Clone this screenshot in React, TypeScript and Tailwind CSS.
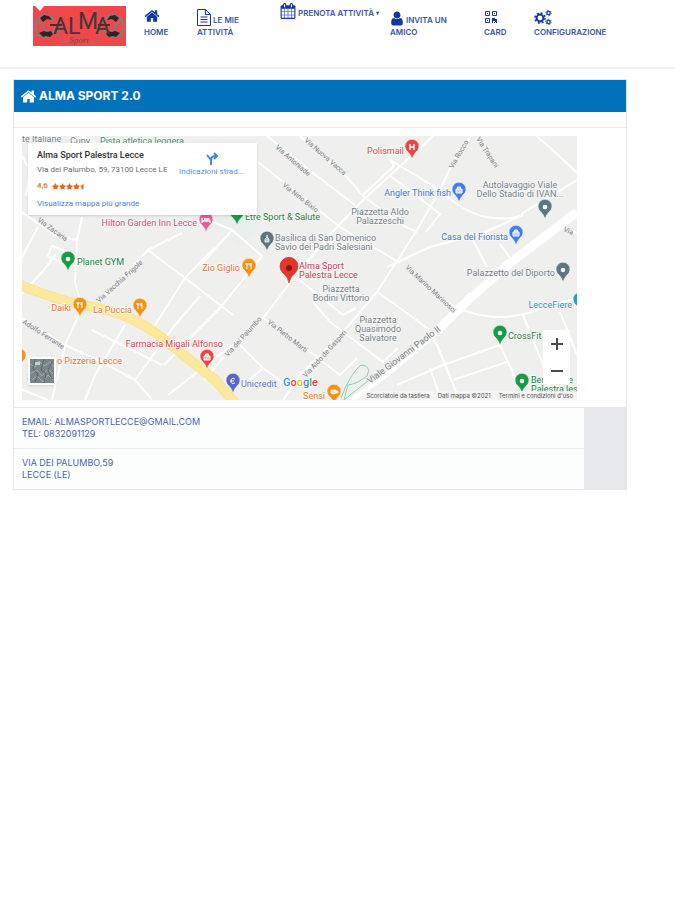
import type { ReactNode } from 'react'
import { FaStar, FaStarHalf } from 'react-icons/fa'

type Pin = { x: number; y: number; color: string; glyph: string }
type Label = { x: number; y: number; lines: string[]; color: string; anchor?: 'start' | 'middle' | 'end' }
type Street = { x: number; y: number; angle: number; name: string }

const GREEN = '#1b8043'
const PINK = '#d8497f'
const ORANGE = '#d97b3c'
const BLUE = '#4a72dc'
const GREY = '#747f86'
const RED = '#d84a48'

// x/y is the tip of the pin
const PINS: Pin[] = [
  { x: 46, y: 135, color: '#169c43', glyph: 'dot' },
  { x: 215, y: 89, color: '#169c43', glyph: 'dot' },
  { x: 184, y: 96, color: '#ea5a94', glyph: 'bed' },
  { x: 390, y: 23, color: '#e8473f', glyph: 'H' },
  { x: 437, y: 66, color: '#3f7df0', glyph: 'bag' },
  { x: 494, y: 109, color: '#3f7df0', glyph: 'bag' },
  { x: 523, y: 83, color: '#5d7681', glyph: 'dot' },
  { x: 541, y: 146, color: '#5d7681', glyph: 'dot' },
  { x: 245, y: 115, color: '#5d7681', glyph: 'church' },
  { x: 227, y: 142, color: '#f29318', glyph: 'fork' },
  { x: 58, y: 181, color: '#f29318', glyph: 'fork' },
  { x: 118, y: 182, color: '#f29318', glyph: 'fork' },
  { x: -3, y: 232, color: '#f29318', glyph: 'fork' },
  { x: 185, y: 233, color: '#e8473f', glyph: 'bag' },
  { x: 211, y: 257, color: '#5967c4', glyph: 'euro' },
  { x: 312, y: 268, color: '#f29318', glyph: 'cup' },
  { x: 478, y: 209, color: '#169c43', glyph: 'dot' },
  { x: 500, y: 257, color: '#169c43', glyph: 'dot' },
  { x: 558, y: 176, color: '#22a6b8', glyph: 'dot' },
]

const LABELS: Label[] = [
  { x: 55, y: 129, lines: ['Planet GYM'], color: GREEN },
  { x: 223, y: 84, lines: ['Etre Sport & Salute'], color: GREEN },
  { x: 175, y: 90, lines: ['Hilton Garden Inn Lecce'], color: PINK, anchor: 'end' },
  { x: 382, y: 18, lines: ['Polismail'], color: RED, anchor: 'end' },
  { x: 429, y: 60, lines: ['Angler Think fish'], color: BLUE, anchor: 'end' },
  { x: 486, y: 104, lines: ['Casa del Fiorista'], color: BLUE, anchor: 'end' },
  { x: 498, y: 52, lines: ['Autolavaggio Viale', 'Dello Stadio di IVAN...'], color: GREY, anchor: 'middle' },
  { x: 533, y: 140, lines: ['Palazzetto del Diporto'], color: GREY, anchor: 'end' },
  { x: 253, y: 105, lines: ['Basilica di San Domenico', 'Savio dei Padri Salesiani'], color: GREY },
  { x: 358, y: 79, lines: ['Piazzetta Aldo', 'Palazzeschi'], color: GREY, anchor: 'middle' },
  { x: 319, y: 156, lines: ['Piazzetta', 'Bodini Vittorio'], color: GREY, anchor: 'middle' },
  { x: 356, y: 187, lines: ['Piazzetta', 'Quasimodo', 'Salvatore'], color: GREY, anchor: 'middle' },
  { x: 218, y: 135, lines: ['Zio Giglio'], color: ORANGE, anchor: 'end' },
  { x: 49, y: 175, lines: ['Daiki'], color: ORANGE, anchor: 'end' },
  { x: 110, y: 177, lines: ['La Puccia'], color: ORANGE, anchor: 'end' },
  { x: 35, y: 228, lines: ['o Pizzeria Lecce'], color: ORANGE },
  { x: 201, y: 211, lines: ['Farmacia Migali Alfonso'], color: RED, anchor: 'end' },
  { x: 219, y: 251, lines: ['Unicredit'], color: '#6470bd' },
  { x: 303, y: 263, lines: ['Sensi'], color: ORANGE, anchor: 'end' },
  { x: 277, y: 133, lines: ['Alma Sport', 'Palestra Lecce'], color: '#cf3a55' },
  { x: 486, y: 203, lines: ['CrossFit'], color: GREEN },
  { x: 509, y: 247, lines: ['Benessere', 'Palestra les'], color: GREEN },
  { x: 550, y: 172, lines: ['LecceFiere'], color: '#2497a8', anchor: 'end' },
  { x: 0, y: 6, lines: ['te Italiane'], color: GREY },
  { x: 48, y: 8, lines: ['Cupy'], color: GREY },
  { x: 78, y: 8, lines: ['Pista atletica leggera'], color: '#4b8a68' },
]

const STREETS: Street[] = [
  { x: 253, y: 12, angle: 41, name: 'Via Antoniade' },
  { x: 282, y: 5, angle: 41, name: 'Via Nuova Vacca' },
  { x: 260, y: 50, angle: 38, name: 'Via Nino Bixio' },
  { x: 15, y: 85, angle: 36, name: 'Via Zacaria' },
  { x: 77, y: 167, angle: -42, name: 'Via Vecchia Frigole' },
  { x: 0, y: 187, angle: 33, name: 'Adolfo Ferrante' },
  { x: 206, y: 221, angle: -48, name: 'Via dei Palumbo' },
  { x: 245, y: 187, angle: 38, name: 'Via Pietro Marti' },
  { x: 284, y: 242, angle: -48, name: 'Via Aldo de Gasperi' },
  { x: 383, y: 132, angle: 43, name: 'Via Marino Marinosci' },
  { x: 431, y: 33, angle: -60, name: 'Via Rocco' },
  { x: 454, y: 3, angle: 57, name: 'Via Trapani' },
  { x: 541, y: 95, angle: 24, name: 'Via' },
]

const ROADS = [
  'M411 0L338 67L315 91L278 134L241 182L215 206L182 244',
  'M245 0L291 37L333 69', 'M278 0L325 41L341 60L382 90L395 96',
  'M236 26L318 91L378 127', 'M451 -3L432 24L418 54L395 94L355 156L321 196L278 239L261 264',
  'M368 24L418 54Q445 80 471 82T501 77L555 44', 'M365 131L408 111L461 97L501 79',
  'M510 -4L535 18L555 37', 'M541 91L555 97', 'M368 40L395 60L418 78L404 96',
  'M385 129Q405 160 441 174T515 174L555 162',
  'M60 81L55 104L53 146L60 172L43 209L30 264', 'M16 91L0 121', 'M0 76L34 100L55 104',
  'M160 97L126 114L76 166', 'M126 114L163 142L211 179', 'M192 112L163 142L131 192',
  'M103 189L73 239L63 264', 'M70 194L140 229', 'M-4 180L43 209L80 226L113 244L130 264',
  'M113 244L153 189L178 160', 'M240 120L198 172L178 192L142 229', 'M-4 252L26 264', 'M146 259L193 222L215 206',
  'M178 80L210 94L178 130', 'M210 94L240 120L228 136', 'M241 182L288 216L318 239L335 222',
  'M215 206L241 232L268 252', 'M241 232L220 250', 'M291 166L308 186L361 226L376 212',
  'M275 142L321 179L334 172', 'M355 156L378 172L405 192L415 209L435 258',
  'M375 249L421 229L478 209L498 252', 'M431 244L485 226', 'M501 179L521 229L530 262',
  'M538 176L555 219', 'M408 232L417 258', 'M451 104L465 131', 'M478 108L488 122', 'M60 0L82 12L79 0',
  'M0 20L8 34L4 60', 'M30 110L52 118L44 128L26 120Z', 'M-2 160L22 134L34 118', 'M341 59L372 30L368 24',
]

function Fa({ d, className }: { d: string; className: string }) {
  return <svg viewBox="0 0 1792 1792" className={className} fill="currentColor" aria-hidden="true"><path d={d} /></svg>
}

const HOME = 'M1472 992v480q0 26-19 45t-45 19h-384v-384h-256v384h-384q-26 0-45-19t-19-45v-480q0-1 .5-3t.5-3l575-474 575 474q1 2 1 6zm223-69l-62 74q-8 9-21 11h-3q-13 0-21-7l-692-577-692 577q-12 8-24 7-13-2-21-11l-62-74q-8-10-7-23.5t11-21.5l719-599q32-26 76-26t76 26l244 204v-195q0-14 9-23t23-9h192q14 0 23 9t9 23v408l219 182q10 8 11 21.5t-7 23.5z'
const CALENDAR = 'M192 1664h288v-288h-288v288zm352 0h320v-288h-320v288zm-352-352h288v-320h-288v320zm352 0h320v-320h-320v320zm-352-384h288v-288h-288v288zm736 736h320v-288h-320v288zm-384-736h320v-288h-320v288zm768 736h288v-288h-288v288zm-384-352h320v-320h-320v320zm-352-864v-288q0-13-9.5-22.5t-22.5-9.5h-64q-13 0-22.5 9.5t-9.5 22.5v288q0 13 9.5 22.5t22.5 9.5h64q13 0 22.5-9.5t9.5-22.5zm736 864h288v-320h-288v320zm-384-384h320v-288h-320v288zm384 0h288v-288h-288v288zm32-480v-288q0-13-9.5-22.5t-22.5-9.5h-64q-13 0-22.5 9.5t-9.5 22.5v288q0 13 9.5 22.5t22.5 9.5h64q13 0 22.5-9.5t9.5-22.5zm384-64v1280q0 52-38 90t-90 38h-1408q-52 0-90-38t-38-90v-1280q0-52 38-90t90-38h128v-96q0-66 47-113t113-47h64q66 0 113 47t47 113v96h384v-96q0-66 47-113t113-47h64q66 0 113 47t47 113v96h128q52 0 90 38t38 90z'
const USER = 'M1536 1399q0 109-62.5 187t-150.5 78h-854q-88 0-150.5-78t-62.5-187q0-85 8.5-160.5t31.5-152 58.5-131 94-89 134.5-34.5q131 128 313 128t313-128q76 0 134.5 34.5t94 89 58.5 131 31.5 152 8.5 160.5zm-256-887q0 159-112.5 271.5t-271.5 112.5-271.5-112.5-112.5-271.5 112.5-271.5 271.5-112.5 271.5 112.5 112.5 271.5z'

function Logo() {
  return (
    <svg viewBox="0 0 93 40" className="w-[93px] h-10 shrink-0" role="img" aria-label="Alma Sport">
      <rect width="93" height="40" fill="#f0484a" />
      <path d="M2 0l5 5 4-5z" fill="#fff" />
      <g fill="none" stroke="#857b80" strokeWidth="2">
        <path d="M3 20q0-8 8-11q8-1 10 6M3 22q0 9 9 9q8 0 9-9M6 16q5 2 5 6t5 3M90 20q0-8-8-11q-8-1-10 6M90 22q0 9-9 9q-8 0-9-9M87 16q-5 2-5 6t-5 3" />
        <path d="M26 22v9q4 6 12 5M67 22v9q-4 6-12 5M26 5v4M67 5v4" strokeWidth="1" />
      </g>
      <g fill="#2c2528">
        <path d="M7 12l4-3 5 1 3 4-5-1-4 3zM6 27l5-2 3 1 4-1 2 3-3 3-4-1-3 1zM86 12l-4-3-5 1-3 4 5-1 4 3zM87 27l-5-2-3 1-4-1-2 3 3 3 4-1 3 1z" />
      </g>
      <path d="M17 19h12M65 19h12" stroke="#3a3134" strokeWidth="2" />
      <g fontFamily="Roboto, sans-serif" fontSize="23" fill="#41363a">
        <text x="20" y="28">A</text>
        <text x="35" y="28">L</text>
        <text x="45" y="23">M</text>
        <text x="62" y="28">A</text>
      </g>
      <text x="46" y="37" textAnchor="middle" fontFamily="Liberation Serif, serif" fontStyle="italic" fontSize="9" fill="#6e4b50">Sport</text>
    </svg>
  )
}

function QrIcon() {
  return (
    <svg viewBox="0 0 14 14" className="mb-[2px] h-[14px] w-[14px]" aria-hidden="true">
      <path d="M1.500 1.500h4v4h-4zM8.500 1.500h4v4h-4zM1.500 8.500h4v4h-4z" fill="none" stroke="currentColor" />
      <path d="M3 3h1v1H3zM10 3h1v1h-1zM3 10h1v1H3zM8 8h3v1h2v3h-2v-1H9v2H8zM10 12h1v1h-1zM12 12h1v1h-1z" fill="currentColor" />
    </svg>
  )
}

function CogsIcon() {
  return (
    <svg viewBox="0 0 18 17" className="h-[17px] w-[18px]" fill="none" stroke="currentColor" aria-hidden="true">
      <circle cx="6" cy="9" r="3.400" strokeWidth="2" />
      <circle cx="6" cy="9" r="5" strokeWidth="1.600" strokeDasharray="2 1.927" />
      <circle cx="14.500" cy="4" r="1.700" strokeWidth="1.200" />
      <circle cx="14.500" cy="4" r="2.700" strokeDasharray="1.300 1.527" />
      <circle cx="14.500" cy="13" r="1.700" strokeWidth="1.200" />
      <circle cx="14.500" cy="13" r="2.700" strokeDasharray="1.300 1.527" />
    </svg>
  )
}

function NavItem({ icon, first, second, className }: { icon: ReactNode; first?: ReactNode; second?: string; className?: string }) {
  return (
    <a href="#" className={`block whitespace-nowrap text-[8px] leading-3 font-semibold text-[#3a54a2] ${className ?? 'pt-2'}`}>
      <span className="flex h-[18px] items-end gap-[2px]">
        <span className="text-[#1237a0]">{icon}</span>
        {first}
      </span>
      {second && <span className="block">{second}</span>}
    </a>
  )
}

function Glyph({ name }: { name: string }) {
  if (name === 'H') return <path d="M-2 -3v6M2 -3v6M-2 0h4" stroke="#fff" strokeWidth="1.4" />
  if (name === 'bed') return <path d="M-4 -2v5M-4 1h8v2M-2 -1h5v2" stroke="#fff" strokeWidth="1.3" fill="none" />
  if (name === 'bag') return <path d="M-3 -1h6v4h-6zM-1.500 -1v-2h3v2" stroke="#fff" fill="#ffffffaa" />
  if (name === 'fork') return <path d="M-2 -3v6M-3 -3v2h2v-2M2 -3v6M1 -3v3" stroke="#fff" fill="none" />
  if (name === 'church') return <path d="M0 -4v3M-1 -3h2M-2 3v-3l2-2 2 2v3z" stroke="#fff" strokeWidth=".8" fill="#fff9" />
  if (name === 'cup') return <path d="M-3 -2h5v3q-2 2-5 0zM2 -1h2v2h-2" stroke="#fff" fill="#fffc" strokeWidth=".8" />
  if (name === 'euro') return <path d="M2 -2q-4-2-4 2t4 2M-3 0h4" stroke="#fff" fill="none" />
  return <circle r="2.300" fill="#fff" />
}

function MapCanvas() {
  return (
    <svg viewBox="0 0 555 264" preserveAspectRatio="xMidYMid slice" className="block w-full h-full font-['Roboto',sans-serif]" role="img" aria-label="Mappa di Lecce">
      <rect width="555" height="264" fill="#efefee" />
      <path d="M170 79Q195 40 235 58L244 78L222 110L188 92Z" fill="#e9efed" />
      <g fill="none" stroke="#fff" strokeWidth="2" strokeLinejoin="round">
        {ROADS.map(d => <path key={d} d={d} />)}
        <path d="M555 76L488 127L448 162L415 195" strokeWidth="9" />
        <path d="M420 192L368 236L330 264" strokeWidth="5" />
        <path d="M478 131L448 157" stroke="#efefef" strokeWidth="1" />
      </g>
      <path d="M-2 149Q30 162 60 169Q92 174 112 184Q132 194 150 210L193 244L214 268" fill="none" stroke="#f8e294" strokeWidth="10" />
      <path d="M-2 149Q30 162 60 169Q92 174 112 184Q132 194 150 210L193 244L214 268" fill="none" stroke="#fde99d" strokeWidth="8" />
      <path d="M319 262Q328 238 339 229Q350 230 345 240Q335 248 326 249L322 264L352 240" fill="none" stroke="#8fcfae" />
      <g fill="#7a7f83" fontSize="7" stroke="#efefef" strokeWidth="1" paintOrder="stroke">
        {STREETS.map(s => (
          <text key={s.name} transform={`translate(${s.x} ${s.y}) rotate(${s.angle})`}>{s.name}</text>
        ))}
        <text fontSize="9" transform="translate(348 248) rotate(-37)">Viale Giovanni Paolo II</text>
      </g>
      {PINS.map(p => (
        <g key={`${p.x}-${p.y}`} transform={`translate(${p.x} ${p.y})`}>
          <path d="M0 0Q-1 -4 -4 -7A7 7 0 1 1 4 -7Q1 -4 0 0Z" fill={p.color} stroke="#fff" strokeWidth=".5" />
          <g transform="translate(0 -12)"><Glyph name={p.glyph} /></g>
        </g>
      ))}
      <path d="M267 147Q266 141 261 137A9 9 0 1 1 273 137Q268 141 267 147Z" fill="#e5352d" stroke="#c0281f" strokeWidth=".6" />
      <circle cx="267" cy="132" r="3" fill="#8c1712" />
      <g fontSize="9" stroke="#f8f8f8" strokeWidth="1.5" paintOrder="stroke">
        {LABELS.map(l => (
          <text key={l.lines[0]} y={l.y} fill={l.color} textAnchor={l.anchor ?? 'start'}>
            {l.lines.map((line, i) => <tspan key={line} x={l.x} dy={i ? 9 : 0}>{line}</tspan>)}
          </text>
        ))}
      </g>
      <text x="261" y="250" fontSize="11" fontWeight="500" stroke="#fff" strokeWidth="1.5" paintOrder="stroke">
        <tspan fill="#4285f4">G</tspan><tspan fill="#ea4335">o</tspan><tspan fill="#fbbc05">o</tspan>
        <tspan fill="#4285f4">g</tspan><tspan fill="#34a853">l</tspan><tspan fill="#ea4335">e</tspan>
      </text>
    </svg>
  )
}

function PlaceCard() {
  return (
    <div className="absolute left-[6px] top-[7px] flex h-[72px] w-[229px] justify-between bg-white px-[9px] py-[6px] font-['Roboto',sans-serif] text-[8px] leading-3 shadow-sm">
      <div className="whitespace-nowrap">
        <h2 className="text-[9px] leading-3 font-medium text-[#303030]">Alma Sport Palestra Lecce</h2>
        <p className="pt-[3px] text-[#6f6f6f]">Via dei Palumbo, 59, 73100 Lecce LE</p>
        <p className="flex items-center gap-1 pt-1 font-medium text-[#dd6b20]">
          4,6
          <span className="flex text-[7px]"><FaStar /><FaStar /><FaStar /><FaStar /><FaStarHalf /></span>
        </p>
        <a href="#" className="block pt-[6px] text-[#4a83cb]">Visualizza mappa più grande</a>
      </div>
      <a href="#" className="flex flex-col items-center whitespace-nowrap pt-[3px] pr-1 text-[#5a8fd2]">
        <svg viewBox="0 0 14 14" className="h-[14px] w-[14px]" fill="none" stroke="#4285e8" strokeWidth="2" aria-hidden="true">
          <path d="M6 13V8L2 3M6 8q0-4 5-4M9 1l3 3-3 3" />
        </svg>
        Indicazioni strad...
      </a>
    </div>
  )
}

export default function App() {
  return (
    <div className="min-h-screen bg-white font-['Inter',sans-serif]">
      <header className="flex h-[69px] items-start border-b-2 border-[#f3f3f3] pl-[33px] pr-12">
        <a href="#" className="mr-[18px] pt-[6px]"><Logo /></a>
        <nav className="grid flex-1 grid-cols-[53fr_83fr_110fr_94fr_50fr_93fr]">
          <NavItem icon={<Fa d={HOME} className="mb-[2px] h-4 w-4" />} second="HOME" />
          <NavItem
            icon={
              <svg viewBox="0 0 14 17" className="h-[17px] w-[14px]" fill="none" stroke="currentColor" aria-hidden="true">
                <path d="M.5 .5h8l5 5v11h-13zM8.500 .5v5h5M3.500 8h7M3.500 10.500h7M3.500 13h7" />
              </svg>
            }
            first="LE MIE"
            second="ATTIVITÀ"
          />
          <NavItem
            icon={<Fa d={CALENDAR} className="h-4 w-4" />}
            first={<>PRENOTA ATTIVITÀ <span className="text-[6px]">▾</span></>}
            className="pt-px"
          />
          <NavItem
            icon={<svg viewBox="128 128 1536 1536" className="h-[15px] w-[14px]" fill="currentColor" aria-hidden="true"><path d={USER} /></svg>}
            first="INVITA UN"
            second="AMICO"
          />
          <NavItem icon={<QrIcon />} second="CARD" />
          <NavItem icon={<CogsIcon />} second="CONFIGURAZIONE" />
        </nav>
      </header>

      <main className="mt-[10px] ml-[13px] mr-12 border border-[#e4e6e9] bg-[#fdfdfd]">
        <h1 className="flex h-8 items-center gap-[2px] bg-[#0271bb] px-[6px] text-[12px] font-bold text-white">
          <Fa d={HOME} className="h-[17px] w-[17px]" />
          ALMA SPORT 2.0
        </h1>
        <div className="h-4 border-b border-[#ececec]" />

        {/* Map */}
        <div className="bg-white pt-2 pb-[7px] pl-2 pr-[49px]">
          <div className="relative h-[264px] overflow-hidden">
            <MapCanvas />
            <PlaceCard />
            <button aria-label="Mostra immagini satellitari" className="absolute bottom-[15px] left-[6px] h-7 w-7 overflow-hidden rounded-[2px] border-2 border-white shadow">
              <svg viewBox="0 0 24 24" className="block h-full w-full" aria-hidden="true">
                <rect width="24" height="24" fill="#7b868b" />
                <path d="M0 5l5 3 4-6 5 5 6-4 4 5M1 14l6-3 5 6 6-7 5 5M2 21l5-4 6 6 5-7 5 5" stroke="#a3adab" fill="none" />
                <path d="M5 0l-2 10 5 5-3 8M14 0l-3 11 5 4-2 9M22 3l-4 8 4 9" stroke="#5b686f" fill="none" />
                <path d="M5 3h5v3h-5z" fill="#c7d0cb" />
              </svg>
            </button>
            <div className="absolute right-[7px] bottom-4 flex w-[27px] flex-col bg-white text-[#4a4a4a]">
              {[['Zoom avanti', 'M1 7h12M7 1v12'], ['Zoom indietro', 'M1 7h12']].map(([label, d]) => (
                <button key={label} aria-label={label} className="flex h-[27px] items-center justify-center">
                  <svg viewBox="0 0 14 14" className="h-[14px] w-[14px]" stroke="currentColor" strokeWidth="2"><path d={d} /></svg>
                </button>
              ))}
            </div>
            <div className="absolute right-0 bottom-0 flex gap-2 bg-[#f5f5f5]/80 px-1 text-[6px] leading-[9px] whitespace-nowrap text-[#4d4d4d]">
              <button>Scorciatoie da tastiera</button>
              <span>Dati mappa ©2021</span>
              <a href="#">Termini e condizioni d'uso</a>
            </div>
          </div>
        </div>

        {/* Contacts */}
        <address className="border-t border-[#e9e9e9] bg-[#e5e6e9] pr-[42px] text-[9px] leading-3 text-[#4a64a3] not-italic">
          <p className="border-b border-[#ececec] bg-[#fcfdfd] px-2 py-2">
            EMAIL: ALMASPORTLECCE@GMAIL.COM<br />TEL: 0832091129
          </p>
          <p className="bg-[#fcfdfd] px-2 py-2">
            VIA DEI PALUMBO,59<br />LECCE (LE)
          </p>
        </address>
      </main>
    </div>
  )
}
